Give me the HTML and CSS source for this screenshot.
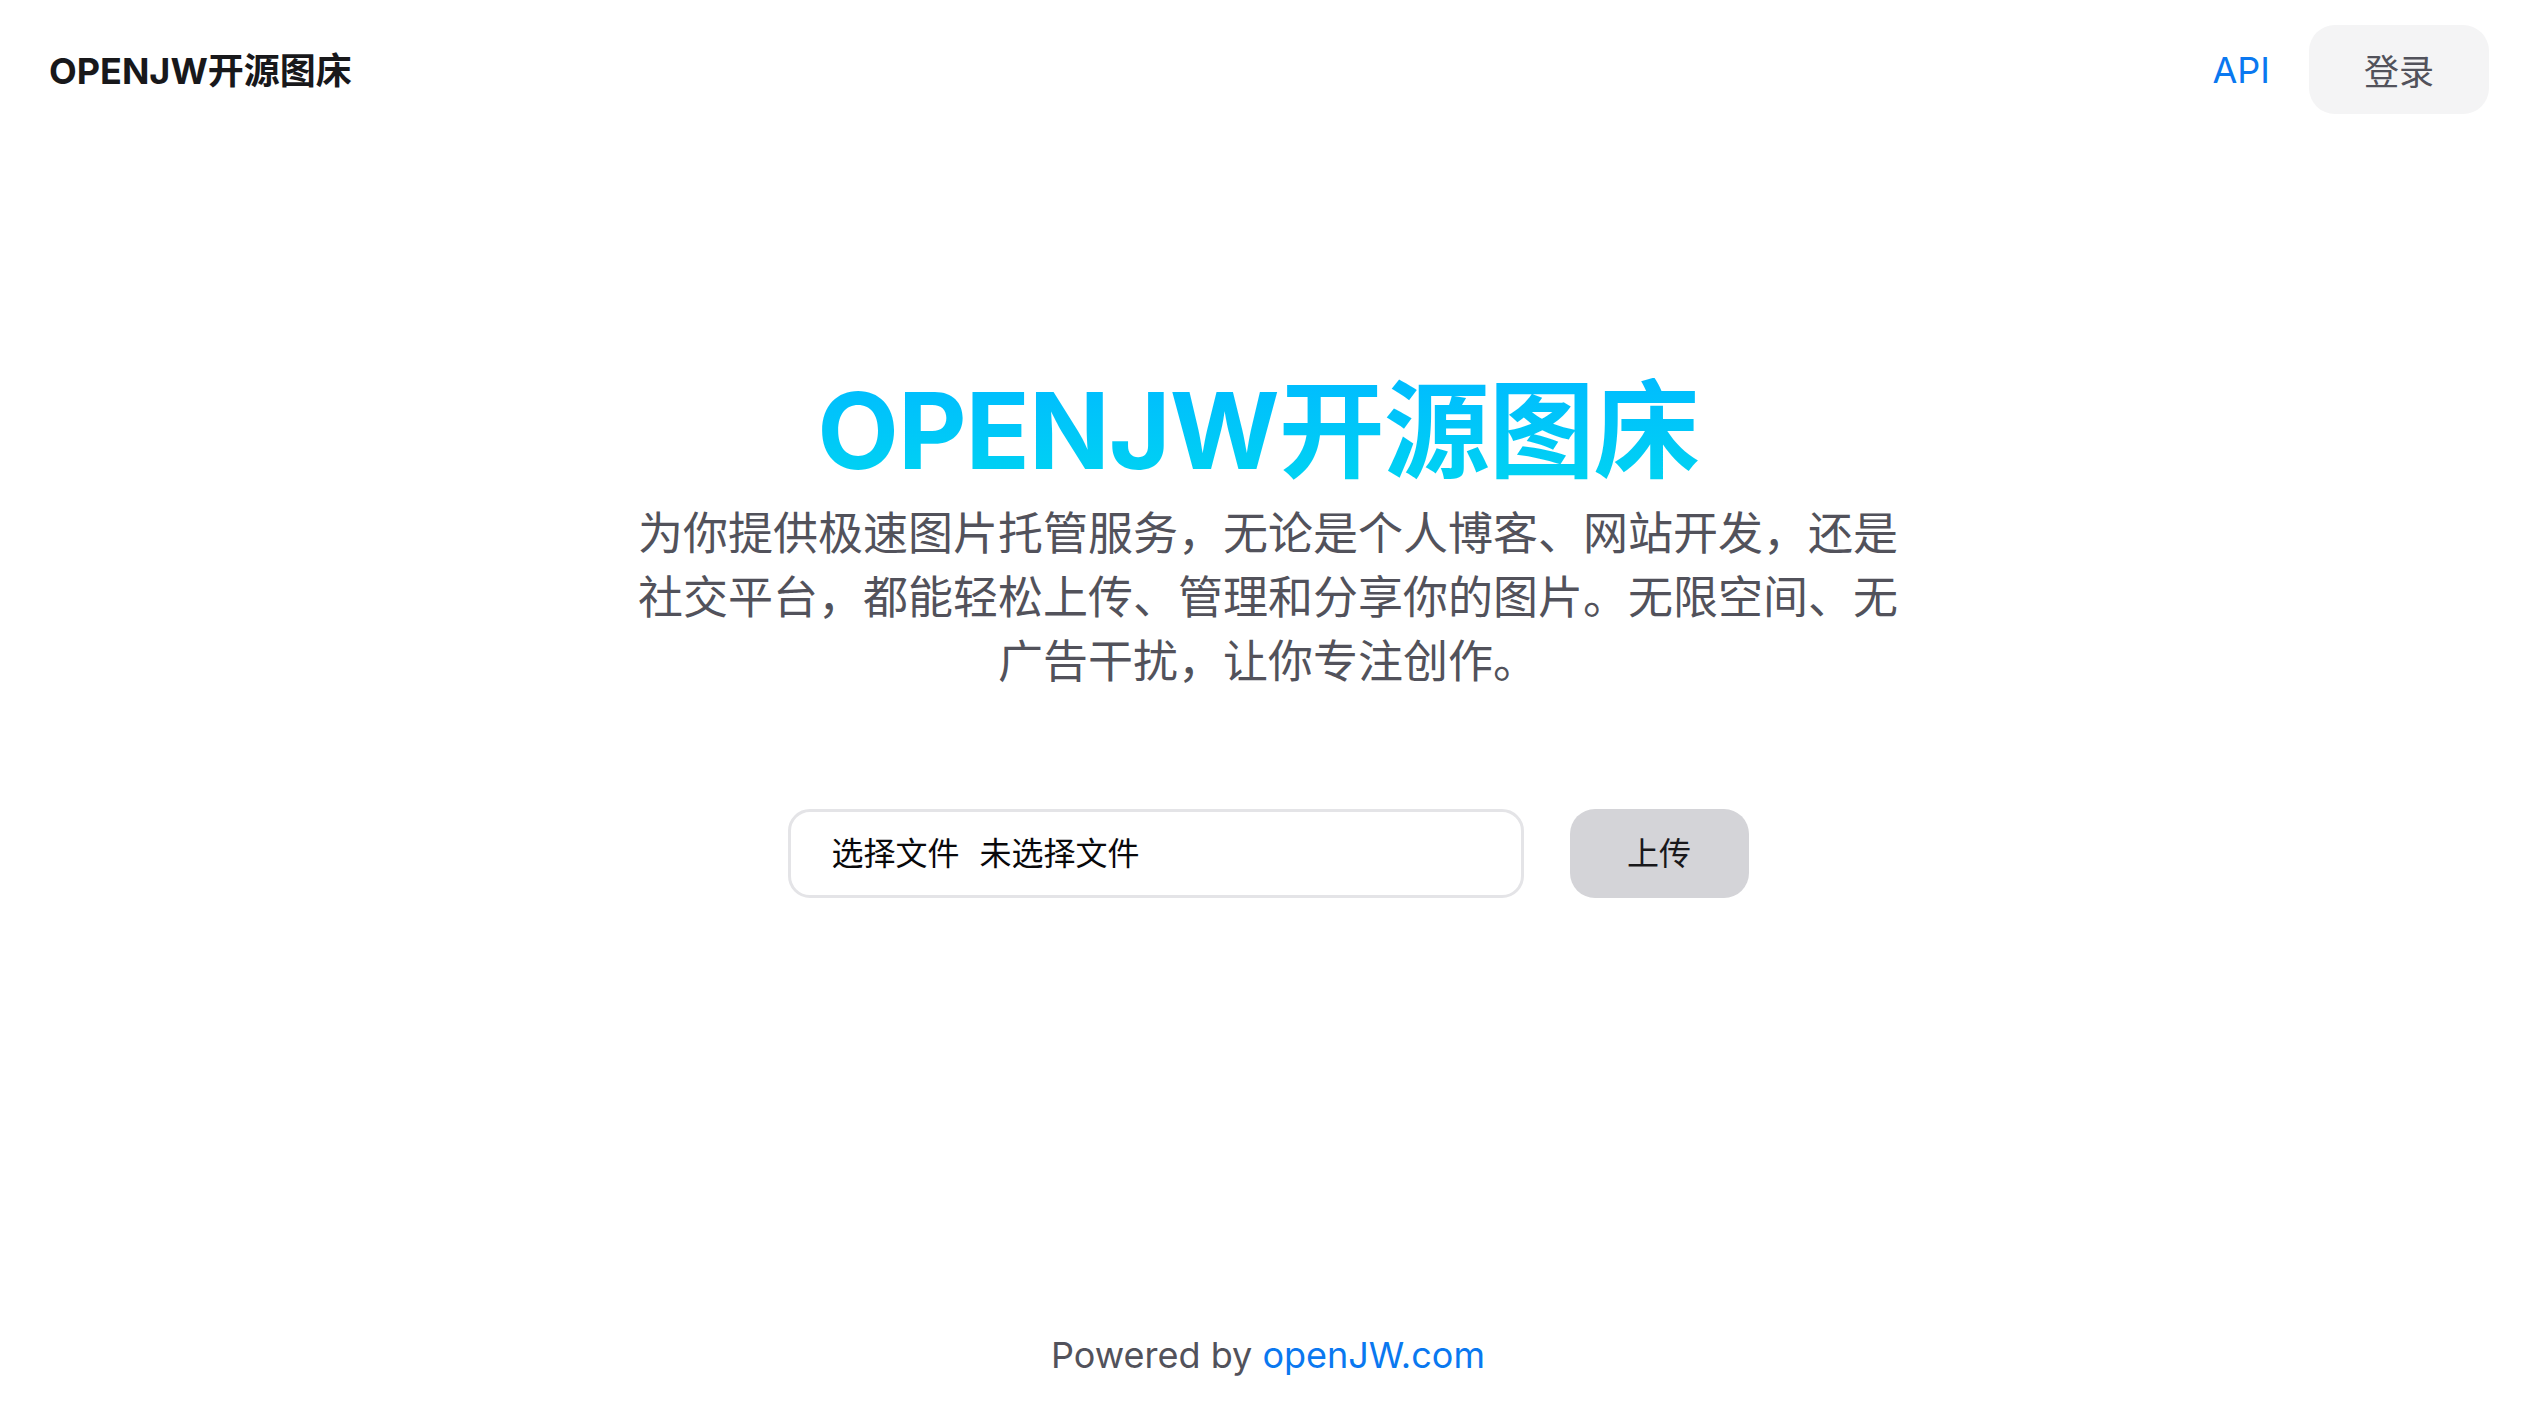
FILE: index.html
```html
<!DOCTYPE html>
<html lang="zh-CN">
<head>
<meta charset="utf-8">
<title>OPENJW开源图床</title>
<link rel="stylesheet" href="styles.css">
</head>
<body>
<div class="page">
  <header class="header">
    <a class="logo" href="#">OPENJW开源图床</a>
    <nav class="nav">
      <a class="nav-link" href="#">API</a>
      <a class="login-btn" href="#">登录</a>
    </nav>
  </header>
  <main class="main">
    <h1 class="title">OPENJW开源图床</h1>
    <p class="desc">为你提供极速图片托管服务，无论是个人博客、网站开发，还是社交平台，都能轻松上传、管理和分享你的图片。无限空间、无广告干扰，让你专注创作。</p>
    <form class="upload-row">
      <label class="file-input">
        <span class="file-btn">选择文件</span>
        <span class="file-name">未选择文件</span>
      </label>
      <button class="upload-btn" type="button">上传</button>
    </form>
  </main>
  <footer class="footer">
    Powered by <a class="footer-link" href="#">openJW.com</a>
  </footer>
</div>
</body>
</html>
```
FILE: styles.css
```css
* { box-sizing: border-box; }
html, body { margin: 0; padding: 0; }
body {
  font-family: Inter, "Noto Sans CJK SC", sans-serif;
  background: #ffffff;
  color: #18181b;
}
a { text-decoration: none; }
.page {
  min-height: 100vh;
  display: flex;
  flex-direction: column;
}
.header {
  display: flex;
  justify-content: space-between;
  align-items: center;
  padding: 25px 37px 0 49px;
}
.logo {
  font-size: 36px;
  font-weight: 700;
  color: #18181b;
  margin-top: -4px;
}
.nav {
  display: flex;
  align-items: center;
  gap: 39px;
}
.nav-link {
  font-size: 36px;
  color: #0a78f0;
}
.login-btn {
  display: flex;
  align-items: center;
  justify-content: center;
  width: 180px;
  height: 89px;
  border-radius: 26px;
  background: #f4f4f5;
  color: #52525b;
  font-size: 35px;
}
.main {
  flex: 1;
  display: flex;
  flex-direction: column;
  align-items: center;
  padding-top: 264px;
  padding-left: 10px;
}
.title {
  margin: 0 20px 0 0;
  font-size: 106px;
  line-height: 1;
  font-weight: 700;
  letter-spacing: -1px;
  background: linear-gradient(to bottom, #00bcff, #00d3f2);
  -webkit-background-clip: text;
  background-clip: text;
  color: transparent;
}
.desc {
  margin: 18px 0 0;
  max-width: 1280px;
  text-align: center;
  font-size: 45px;
  line-height: 64px;
  color: #52525b;
}
.upload-row {
  display: flex;
  align-items: center;
  gap: 46px;
  margin-top: 115px;
}
.file-input {
  display: flex;
  align-items: center;
  width: 736px;
  height: 89px;
  padding: 0 41px 5px;
  border: 3px solid #e4e4e7;
  border-radius: 22px;
  background: #fff;
  font-size: 32px;
  color: #09090b;
}
.file-btn { margin-right: 20px; }
.upload-btn {
  width: 179px;
  height: 89px;
  border: none;
  border-radius: 25px;
  background: #d4d4d8;
  font-family: inherit;
  font-size: 32px;
  color: #18181b;
  padding: 0 0 5px;
}
.footer {
  text-align: center;
  font-size: 36px;
  color: #52525b;
  padding: 0 0 25px 10px;
}
.footer-link { color: #0a78f0; }
```
